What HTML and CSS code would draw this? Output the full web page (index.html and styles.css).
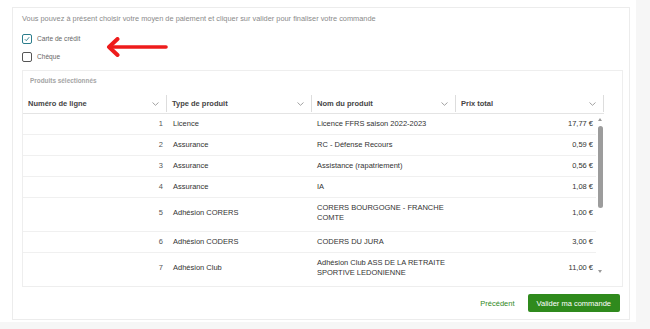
FILE: index.html
```html
<!DOCTYPE html>
<html lang="fr">
<head>
    <meta charset="UTF-8">
    <title>Paiement</title>
    <link rel="stylesheet" href="styles.css">
</head>
<body>
    <div class="page">
        <div class="card">
            <p class="intro">Vous pouvez à présent choisir votre moyen de paiement et cliquer sur valider pour finaliser votre commande</p>

            <div class="options">
                <label class="option">
                    <span class="box box-checked">
                        <svg width="6" height="6" viewBox="0 0 6 6"><path d="M0.8 3.2 L2.3 4.7 L5.2 1.2" fill="none" stroke="#2b7d8c" stroke-width="0.9"/></svg>
                    </span>
                    <span>Carte de crédit</span>
                </label>
                <label class="option">
                    <span class="box"></span>
                    <span>Chèque</span>
                </label>
                <svg class="arrow" width="66" height="20" viewBox="0 0 66 20">
                    <path d="M5 10 H61" stroke="#ee1c1c" stroke-width="3.6" stroke-linecap="round"/>
                    <path d="M12.5 2 L4 10 L12.5 18" fill="none" stroke="#ee1c1c" stroke-width="4" stroke-linecap="round" stroke-linejoin="round"/>
                </svg>
            </div>

            <div class="panel">
                <div class="panel-title"><span>Produits sélectionnés</span></div>
                <div class="grid">
                    <div class="grid-head">
                        <div class="head-cell"><span>Numéro de ligne</span><svg class="chev" width="7" height="4" viewBox="0 0 7 4"><path d="M0.5 0.5 L3.5 3.3 L6.5 0.5" fill="none" stroke="#8a8a8a" stroke-width="0.8"/></svg></div>
                        <div class="head-cell"><span>Type de produit</span><svg class="chev" width="7" height="4" viewBox="0 0 7 4"><path d="M0.5 0.5 L3.5 3.3 L6.5 0.5" fill="none" stroke="#8a8a8a" stroke-width="0.8"/></svg></div>
                        <div class="head-cell"><span>Nom du produit</span><svg class="chev" width="7" height="4" viewBox="0 0 7 4"><path d="M0.5 0.5 L3.5 3.3 L6.5 0.5" fill="none" stroke="#8a8a8a" stroke-width="0.8"/></svg></div>
                        <div class="head-cell"><span>Prix total</span><svg class="chev" width="7" height="4" viewBox="0 0 7 4"><path d="M0.5 0.5 L3.5 3.3 L6.5 0.5" fill="none" stroke="#8a8a8a" stroke-width="0.8"/></svg></div>
                    </div>
                    <div class="grid-body">
                        <div class="rows">
                            <div class="row"><div class="c-num">1</div><div class="c-type">Licence</div><div class="c-name">Licence FFRS saison 2022-2023</div><div class="c-price">17,77 €</div></div>
                            <div class="row"><div class="c-num">2</div><div class="c-type">Assurance</div><div class="c-name">RC - Défense Recours</div><div class="c-price">0,59 €</div></div>
                            <div class="row"><div class="c-num">3</div><div class="c-type">Assurance</div><div class="c-name">Assistance (rapatriement)</div><div class="c-price">0,56 €</div></div>
                            <div class="row"><div class="c-num">4</div><div class="c-type">Assurance</div><div class="c-name">IA</div><div class="c-price">1,08 €</div></div>
                            <div class="row row-tall"><div class="c-num">5</div><div class="c-type">Adhésion CORERS</div><div class="c-name">CORERS BOURGOGNE - FRANCHE COMTE</div><div class="c-price">1,00 €</div></div>
                            <div class="row"><div class="c-num">6</div><div class="c-type">Adhésion CODERS</div><div class="c-name">CODERS DU JURA</div><div class="c-price">3,00 €</div></div>
                            <div class="row row-tall"><div class="c-num">7</div><div class="c-type">Adhésion Club</div><div class="c-name">Adhésion Club ASS DE LA RETRAITE SPORTIVE LEDONIENNE</div><div class="c-price">11,00 €</div></div>
                        </div>
                        <div class="scrollbar">
                            <span class="scroll-up"></span>
                            <span class="scroll-thumb"></span>
                            <span class="scroll-down"></span>
                        </div>
                    </div>
                </div>
            </div>

            <div class="actions">
                <button class="btn-link">Précédent</button>
                <button class="btn-primary">Valider ma commande</button>
            </div>
        </div>
    </div>
</body>
</html>
```

FILE: styles.css
```css
:root {
    --green: #2f8a1d;
    --line: #ececec;
    --text: #333;
    --muted: #8a8a8a;
}
body {
    margin: 0;
    background: #f6f6f6;
    font-family: 'Liberation Sans', Arial, sans-serif;
    color: var(--text);
}
.page {
    width: 636px;
    height: 322px;
    box-sizing: border-box;
    background: #fff;
    padding: 7px 6px 2px 12px;
}
.card {
    height: 313px;
    box-sizing: border-box;
    border: 1px solid var(--line);
    padding: 6px 6px 0 9px;
}
.intro {
    margin: 0;
    font-size: 7.4px;
    line-height: 10px;
    color: var(--muted);
}
.options {
    position: relative;
    margin-top: 10px;
    display: flex;
    flex-direction: column;
    gap: 8px;
}
.option {
    display: flex;
    align-items: center;
    gap: 5px;
    font-size: 6.6px;
    line-height: 10px;
    color: #666;
}
.box {
    width: 10px;
    height: 10px;
    box-sizing: border-box;
    border: 1px solid #555;
    border-radius: 2px;
    display: flex;
    align-items: center;
    justify-content: center;
}
.box-checked {
    border-color: #2b7d8c;
}
.arrow {
    position: absolute;
    left: 83px;
    top: 3px;
}
.panel {
    margin-top: 8px;
    border: 1px solid #eeeeee;
    padding: 0 18px 6px 0;
}
.panel-title {
    padding: 5px 7px 8px;
    font-weight: bold;
    font-size: 8px;
    line-height: 10px;
    color: #a5a5a5;
}
.panel-title span {
    display: inline-block;
    transform: scaleX(0.8);
    transform-origin: left center;
}
.grid {
    width: 581px;
    font-size: 7.5px;
}
.grid-head {
    display: grid;
    grid-template-columns: 144px 145px 144px 148px;
    height: 19px;
    border-bottom: 1px solid #e4e4e4;
}
.head-cell {
    display: flex;
    align-items: center;
    justify-content: space-between;
    padding: 0 7px 0 5px;
    margin: 1px 0;
    border-right: 1px solid #dddddd;
    font-weight: bold;
    color: #444;
}
.grid-body {
    display: flex;
    height: 166px;
    overflow: hidden;
}
.rows {
    flex: 1;
}
.row {
    display: grid;
    grid-template-columns: 144px 145px 144px 140px;
    align-items: center;
    min-height: 21px;
    box-sizing: border-box;
    border-bottom: 1px solid #f0f0f0;
    line-height: 10px;
}
.row-tall {
    padding: 5px 0 8px;
}
.c-num {
    text-align: right;
    padding-right: 4px;
    color: #555;
}
.c-type {
    padding-left: 6px;
}
.c-name {
    padding: 0 1px 0 5px;
}
.c-price {
    text-align: right;
    padding-right: 3px;
}
.scrollbar {
    width: 8px;
    display: flex;
    flex-direction: column;
    align-items: center;
    padding-top: 4px;
}
.scroll-up,
.scroll-down {
    width: 0;
    height: 0;
    border-left: 2.5px solid transparent;
    border-right: 2.5px solid transparent;
}
.scroll-up {
    border-bottom: 3px solid #9a9a9a;
}
.scroll-thumb {
    width: 5px;
    height: 82px;
    margin: 5px 0 62px;
    border-radius: 3px;
    background: #9c9c9c;
}
.scroll-down {
    border-top: 3px solid #9a9a9a;
}
.actions {
    display: flex;
    justify-content: flex-end;
    align-items: center;
    gap: 9px;
    margin-top: 7px;
    padding-right: 3px;
}
.btn-link {
    background: transparent;
    border: none;
    padding: 0 4px;
    font-family: inherit;
    font-size: 7.5px;
    color: var(--green);
    cursor: pointer;
}
.btn-primary {
    height: 18px;
    padding: 0 9px;
    border: none;
    border-radius: 2px;
    background: var(--green);
    color: #fff;
    font-family: inherit;
    font-size: 7.5px;
    cursor: pointer;
}
```
